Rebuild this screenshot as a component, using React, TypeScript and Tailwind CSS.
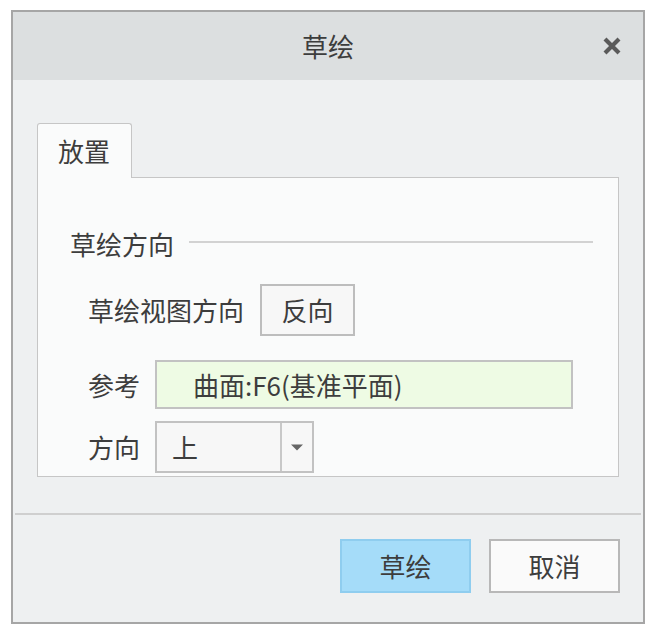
const font = { fontFamily: '"Noto Sans CJK SC", "Noto Sans", sans-serif' };

const CloseIcon = () => (
  <svg width="20" height="20" viewBox="0 0 20 20">
    <path d="M3 3 L17 17 M17 3 L3 17" stroke="#5a5a5a" strokeWidth="4.2" strokeLinecap="butt" />
  </svg>
);

const CaretDown = () => (
  <svg width="14" height="9" viewBox="0 0 14 9">
    <path d="M1 1.5 H13 L7 7.5 Z" fill="#666" />
  </svg>
);

export default function App() {
  return (
    <div className="w-[660px] h-[637px] bg-white pl-[11px] pt-[10px] text-[#3d3d3d]" style={font}>
      <div className="w-[634px] h-[614px] border-2 border-[#a6a6a6] bg-[#eef0f1] flex flex-col">
        {/* title bar */}
        <div className="relative h-[68px] shrink-0 bg-[#dcdfe0] flex items-center justify-center">
          <span className="text-[26px] leading-none">草绘</span>
          <div className="absolute right-[21px] top-[24px]">
            <CloseIcon />
          </div>
        </div>

        {/* body */}
        <div className="h-[433px] shrink-0 px-[24px] pt-[43px]">
          <div className="relative z-10 -mb-px w-[95px] h-[55px] border border-b-0 border-[#c6c6c6] rounded-t-[3px] bg-[#fafbfb] pl-[20px] flex items-center">
            <span className="text-[26px] leading-none">放置</span>
          </div>
          <div className="h-[300px] border border-[#c6c6c6] bg-[#fafbfb] flex flex-col">
            <div className="mt-[51px] h-[30px] pl-[32px] pr-[25px] flex items-center">
              <span className="text-[26px] leading-none">草绘方向</span>
              <div className="flex-1 h-[2px] bg-[#d2d2d2] ml-[15px] -mt-[4px]" />
            </div>

            <div className="mt-[25px] pl-[50px] flex items-center">
              <span className="text-[26px] leading-none">草绘视图方向</span>
              <button className="ml-[16px] w-[95px] h-[52px] border-2 border-[#bdbdbd] bg-[#f7f7f7] text-[26px] leading-none text-[#3d3d3d]">
                反向
              </button>
            </div>

            <div className="mt-[24px] pl-[50px] flex items-center">
              <span className="w-[67px] text-[26px] leading-none">参考</span>
              <div className="w-[418px] h-[49px] border-2 border-[#c2c2c2] bg-[#eefbe4] pl-[36px] flex items-center">
                <span className="text-[26px] leading-none">曲面:F6(基准平面)</span>
              </div>
            </div>

            <div className="mt-[12px] pl-[50px] flex items-center">
              <span className="w-[67px] text-[26px] leading-none">方向</span>
              <div className="w-[159px] h-[52px] border-2 border-[#c2c2c2] bg-[#f7f7f7] flex">
                <div className="w-[123px] pl-[15px] flex items-center">
                  <span className="text-[26px] leading-none">上</span>
                </div>
                <div className="flex-1 border-l-2 border-[#c8c8c8] flex items-center justify-center">
                  <CaretDown />
                </div>
              </div>
            </div>
          </div>
        </div>

        <div className="mx-[2px] h-[2px] bg-[#cfcfcf] shrink-0" />

        {/* footer */}
        <div className="flex justify-end gap-[18px] pr-[23px] pt-[24px]">
          <button className="w-[131px] h-[54px] border-2 border-[#8fcdef] bg-[#a5dcf9] text-[26px] leading-none text-[#3d3d3d]">
            草绘
          </button>
          <button className="w-[131px] h-[54px] border-2 border-[#b8b8b8] bg-[#fafafa] text-[26px] leading-none text-[#3d3d3d]">
            取消
          </button>
        </div>
      </div>
    </div>
  );
}
